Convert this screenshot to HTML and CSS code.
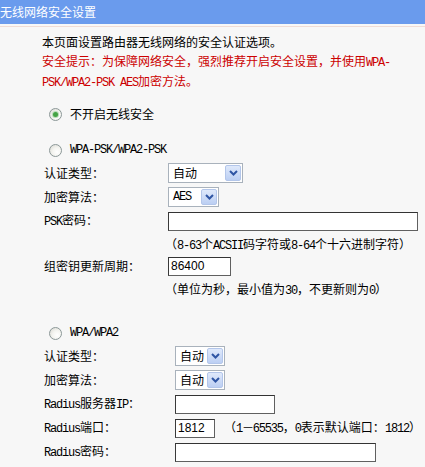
FILE: index.html
```html
<!DOCTYPE html>
<html lang="zh-CN">
<head>
<meta charset="utf-8">
<title>无线网络安全设置</title>
<link rel="stylesheet" href="styles.css">
</head>
<body>
<div class="header">无线网络安全设置</div>
<div class="rule"></div>
<div class="content">
  <p class="intro">本页面设置路由器无线网络的安全认证选项。</p>
  <p class="warn">安全提示：为保障网络安全，强烈推荐开启安全设置，并使用<span class="en">WPA-</span><br><span class="en">PSK/WPA2-PSK AES</span>加密方法。</p>

  <div class="radio-row r1"><span class="radio checked"></span><span>不开启无线安全</span></div>

  <div class="radio-row r2"><span class="radio"></span><span class="en">WPA-PSK/WPA2-PSK</span></div>
  <div class="form f1">
    <div class="row">
      <div class="label">认证类型：</div>
      <div class="select w75"><span class="val">自动</span><span class="btn"><svg width="9" height="6" viewBox="0 0 9 6"><path d="M1 1 L4.5 4.5 L8 1" fill="none" stroke="#2f55a4" stroke-width="2"/></svg></span></div>
    </div>
    <div class="row">
      <div class="label">加密算法：</div>
      <div class="select w51"><span class="val en">AES</span><span class="btn"><svg width="9" height="6" viewBox="0 0 9 6"><path d="M1 1 L4.5 4.5 L8 1" fill="none" stroke="#2f55a4" stroke-width="2"/></svg></span></div>
    </div>
    <div class="row">
      <div class="label"><span class="en">PSK</span>密码：</div>
      <div class="input w250"></div>
    </div>
    <div class="hint">（<span class="en">8-63</span>个<span class="en">ACSII</span>码字符或<span class="en">8-64</span>个十六进制字符）</div>
    <div class="row">
      <div class="label">组密钥更新周期：</div>
      <div class="input w63">86400</div>
    </div>
    <div class="hint">（单位为秒，最小值为<span class="en">30</span>，不更新则为<span class="en">0</span>）</div>
  </div>

  <div class="radio-row r3"><span class="radio"></span><span class="en">WPA/WPA2</span></div>
  <div class="form f2">
    <div class="row">
      <div class="label">认证类型：</div>
      <div class="select w50"><span class="val">自动</span><span class="btn"><svg width="9" height="6" viewBox="0 0 9 6"><path d="M1 1 L4.5 4.5 L8 1" fill="none" stroke="#2f55a4" stroke-width="2"/></svg></span></div>
    </div>
    <div class="row">
      <div class="label">加密算法：</div>
      <div class="select w50"><span class="val">自动</span><span class="btn"><svg width="9" height="6" viewBox="0 0 9 6"><path d="M1 1 L4.5 4.5 L8 1" fill="none" stroke="#2f55a4" stroke-width="2"/></svg></span></div>
    </div>
    <div class="row">
      <div class="label"><span class="en">Radius</span>服务器<span class="en">IP</span>：</div>
      <div class="input w100"></div>
    </div>
    <div class="row">
      <div class="label"><span class="en">Radius</span>端口：</div>
      <div class="input w40">1812</div>
      <div class="note">（<span class="en">1－65535</span>，<span class="en">0</span>表示默认端口：<span class="en">1812</span>）</div>
    </div>
    <div class="row">
      <div class="label"><span class="en">Radius</span>密码：</div>
      <div class="input w201"></div>
    </div>
    <div class="row">
      <div class="label">组密钥更新周期：</div>
      <div class="input w63">86400</div>
    </div>
  </div>
</div>
</body>
</html>
```

FILE: styles.css
```css
html, body {
  margin: 0;
  padding: 0;
}

body {
  background: #f7f7f7;
  color: #000;
  font-family: "Noto Sans CJK SC", "Noto Sans", sans-serif;
  font-size: 12px;
  line-height: 18px;
}

.en {
  font-family: "Liberation Mono", "Noto Sans CJK SC", monospace;
  letter-spacing: -1.2px;
}

.header {
  height: 24px;
  line-height: 24px;
  background: #6a9bed;
  color: #fff;
  font-size: 12px;
  padding-left: 0;
  white-space: nowrap;
}

.rule {
  margin-top: 2px;
  height: 1px;
  background: #efdcd6;
}

.content {
  display: flex;
  flex-direction: column;
}

.intro {
  margin: 6px 0 0 0;
  padding-left: 42px;
  line-height: 18px;
}

.warn {
  margin: 1px 0 0 0;
  padding-left: 42px;
  line-height: 18px;
  color: #cc0000;
}

.radio-row {
  display: flex;
  align-items: center;
  gap: 8px;
  padding-left: 49px;
}

.r1 {
  margin-top: 10px;
  height: 24px;
}

.r2 {
  margin-top: 13px;
  height: 22px;
}

.r3 {
  margin-top: 23px;
  height: 22px;
}

.radio {
  width: 13px;
  height: 13px;
  box-sizing: border-box;
  border-radius: 50%;
  border: 1px solid #8c9898;
  background: radial-gradient(circle at 65% 65%, #ffffff 0%, #f4f4f0 45%, #d6d6d0 100%);
  display: flex;
  align-items: center;
  justify-content: center;
}

.radio.checked::after {
  content: "";
  width: 5px;
  height: 5px;
  border-radius: 50%;
  background: #45a345;
  box-shadow: 0 0 0 1px #b8dcb8;
}

.form {
  display: flex;
  flex-direction: column;
  padding-left: 44px;
}

.row {
  display: flex;
  align-items: center;
  height: 24px;
  white-space: nowrap;
}

.f1 .label {
  width: 124px;
}

.f2 .label {
  width: 131px;
}

.f1 .hint {
  padding-left: 121px;
}

.hint {
  height: 21px;
  line-height: 21px;
  white-space: nowrap;
}

.note {
  margin-left: 9px;
  white-space: nowrap;
}

.select {
  display: flex;
  align-items: center;
  justify-content: space-between;
  box-sizing: border-box;
  height: 20px;
  padding: 1px;
  border: 1px solid #a9b2bc;
  background: #fff;
}

.select .val {
  padding-left: 3px;
}

.btn {
  width: 16px;
  height: 16px;
  box-sizing: border-box;
  border: 1px solid #b3c6ea;
  border-radius: 2px;
  background: linear-gradient(#dfe9fb, #bccff3);
  display: flex;
  align-items: center;
  justify-content: center;
}

.input {
  box-sizing: border-box;
  height: 19px;
  line-height: 17px;
  border: 1px solid #606060;
  border-top-color: #333;
  border-left-color: #3a3a3a;
  background: #fff;
  padding-left: 2px;
  font-family: "Liberation Sans", Arial, sans-serif;
  font-size: 12px;
}

.w40 { width: 40px; }
.w50 { width: 50px; }
.w51 { width: 51px; }
.w63 { width: 63px; }
.w75 { width: 75px; }
.w100 { width: 100px; }
.w201 { width: 201px; }
.w250 { width: 250px; }
```
